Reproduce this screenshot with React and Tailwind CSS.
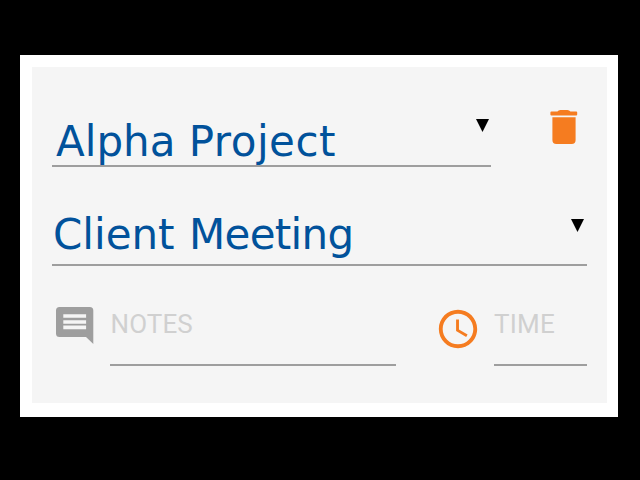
import { MdAccessTime } from "react-icons/md";

const Caret = ({ className }) => (
  <svg className={className} viewBox="0 0 13 13" fill="#000">
    <path d="M0 0h13L6.5 13z" />
  </svg>
);

const TrashIcon = ({ className }) => (
  <svg className={className} viewBox="0 0 28 34" fill="currentColor">
    <path d="M7.400 1.600Q8.400 0 10.400 0h7q2 0 3 1.600h5.800q1 0 1 1v2q0 1-1 1H1.400q-1 0-1-1v-2q0-1 1-1z" />
    <path d="M2.400 7.200h23.200V30q0 4-4 4H6.400q-4 0-4-4z" />
  </svg>
);

const NotesIcon = ({ className }) => (
  <svg className={className} viewBox="0 0 38 37" fill="currentColor">
    <path
      fillRule="evenodd"
      d="M3.500 0h30.300q3.500 0 3.500 3.500V37L30 30H3.500Q0 30 0 26.500V3.500Q0 0 3.500 0zM7.300 7.200v3.600h22.800V7.200zM7.300 13.200v3.600h22.800v-3.600zM7.300 18.600v3.700h22.800v-3.700z"
    />
  </svg>
);

export default function App() {
  return (
    <div className="h-[480px] w-[640px] bg-black pt-[55px] pl-[20px]">
      <div className="h-[362px] w-[598px] bg-white p-[12px] pr-[11px] pb-[14px]">
        <div className="h-full bg-[#f5f5f5] pr-[20px] pl-[20px] font-['DejaVu_Sans',sans-serif]">
          <div className="flex h-[100px] items-start justify-between">
            <div className="flex h-[100px] w-[439px] justify-between border-b-2 border-[#9e9e9e] pt-[50px] pl-[4px]">
              <span className="text-[42px] leading-[49px] whitespace-nowrap text-[#01529b]">
                Alpha <span className="tracking-[0.5px]">Project</span>
              </span>
              <Caret className="mt-[2px] mr-[2px] h-[13px] w-[13px]" />
            </div>
            <TrashIcon className="mt-[43px] mr-[9px] h-[34px] w-[28px] text-[#f57c20]" />
          </div>
          <div className="flex h-[99px] justify-between border-b-2 border-[#9e9e9e] pt-[43px] pl-[1px]">
            <span className="text-[42px] leading-[49px] whitespace-nowrap text-[#01529b] [word-spacing:1px]">
              Client <span className="tracking-[-0.7px]">Meeting</span>
            </span>
            <Caret className="mt-[9px] mr-[3px] h-[13px] w-[13px]" />
          </div>
          <div className="flex h-[100px] font-[Roboto,sans-serif] text-[26px] leading-[30px] text-[#d0d0d0]">
            <NotesIcon className="mt-[41px] ml-[4px] h-[37px] w-[38px] text-[#9e9e9e]" />
            <div className="ml-[16px] h-[100px] w-[286px] border-b-2 border-[#9e9e9e] pt-[43px] pl-[0.5px] tracking-[0.1px]">NOTES</div>
            <MdAccessTime className="mt-[40px] ml-[39px] h-[46px] w-[46px] text-[#f57c20]" />
            <div className="ml-[13px] h-[100px] w-[93px] border-b-2 border-[#9e9e9e] pt-[43px] tracking-[0.2px]">TIME</div>
          </div>
        </div>
      </div>
    </div>
  );
}
